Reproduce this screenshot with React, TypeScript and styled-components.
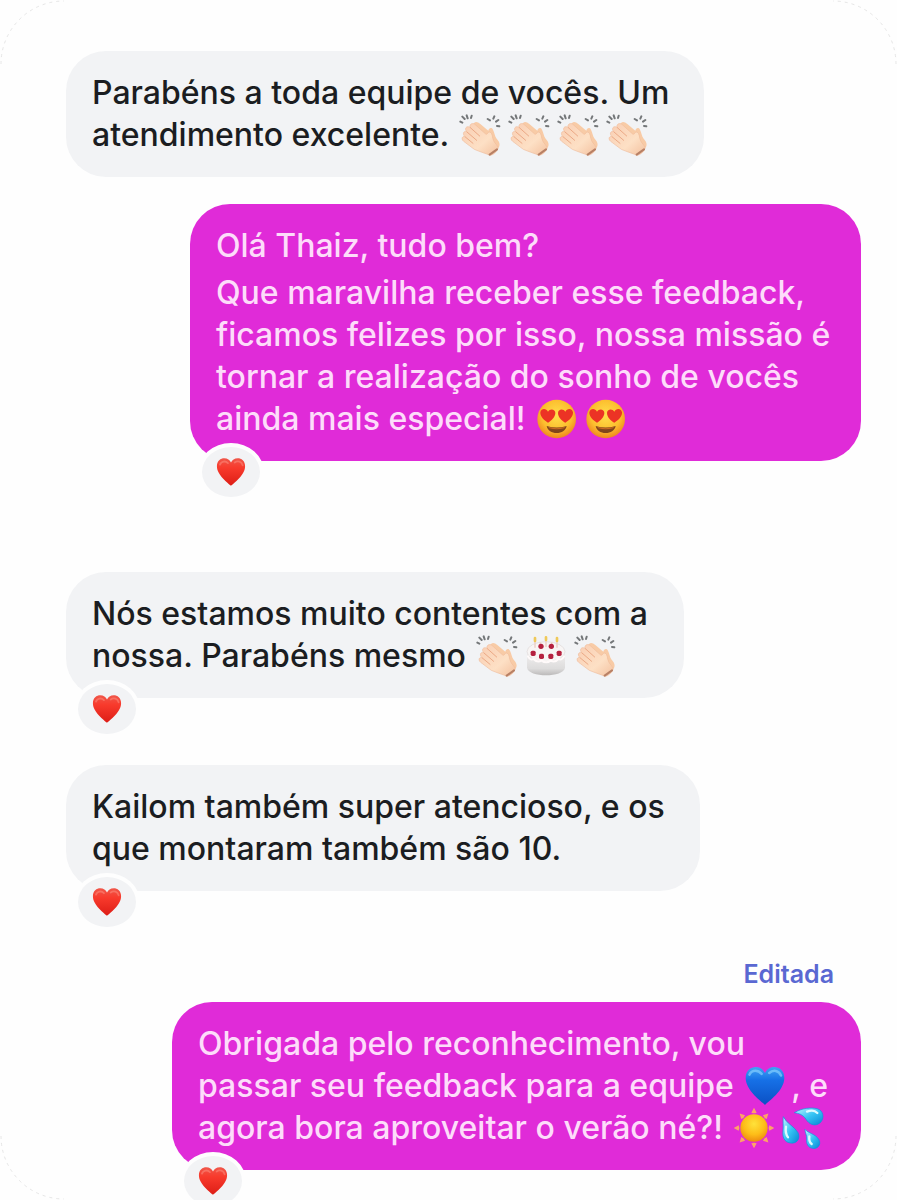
import React from "react";
import styled, { createGlobalStyle } from "styled-components";

const GlobalStyle = createGlobalStyle`
  *, *::before, *::after { box-sizing: border-box; }
  body {
    margin: 0;
    background: #fefefe;
    font-family: Inter, "Liberation Sans", sans-serif;
  }
`;

type Side = "received" | "sent";

const Page = styled.main`
  position: relative;
  overflow: hidden;
  padding: 51px 36px 30px 66px;
`;

const Thread = styled.ol`
  display: flex;
  flex-direction: column;
  margin: 0;
  padding: 0;
  list-style: none;
`;

const Message = styled.li<{ $side: Side; $gap: number }>`
  display: flex;
  flex-direction: column;
  align-items: ${(p) => (p.$side === "sent" ? "flex-end" : "flex-start")};
  margin-top: ${(p) => p.$gap}px;
`;

const Bubble = styled.div<{ $side: Side; $width: number }>`
  position: relative;
  display: flex;
  flex-direction: column;
  gap: 5px;
  width: ${(p) => p.$width}px;
  max-width: 100%;
  padding: 21px 0 21px 26px;
  border-radius: 40px;
  background: ${(p) => (p.$side === "sent" ? "#e02bd8" : "#f2f3f5")};
  color: ${(p) => (p.$side === "sent" ? "#fddcfa" : "#1b1d21")};
`;

const Paragraph = styled.p`
  margin: 0;
  font-size: 32px;
  font-weight: 450;
  line-height: 42px;
  white-space: nowrap;
`;

const Reaction = styled.span`
  position: absolute;
  left: 8px;
  bottom: -40px;
  display: flex;
  align-items: center;
  justify-content: center;
  width: 66px;
  height: 58px;
  border: 4px solid #fefefe;
  border-radius: 50%;
  background: #f2f3f5;
`;

const EditedLabel = styled.span`
  margin: 0 27px 12px 0;
  font-size: 25px;
  font-weight: 600;
  line-height: 32px;
  color: #5a68d2;
`;

const Glyph = styled.svg`
  width: 42px;
  height: 42px;
  margin: -4px 5px -4px 2px;
  vertical-align: -6px;
`;

const SmallHeart = styled.svg`
  width: 32px;
  height: 30px;
`;

const Corner = styled.svg<{ $bottom?: boolean; $right?: boolean }>`
  position: absolute;
  width: 64px;
  height: 64px;
  ${(p) => (p.$bottom ? "bottom: 0;" : "top: 0;")}
  ${(p) => (p.$right ? "right: 0;" : "left: 0;")}
  transform: scale(${(p) => (p.$right ? -1 : 1)}, ${(p) => (p.$bottom ? -1 : 1)});
  pointer-events: none;
`;

const Gradients = styled.svg`
  position: absolute;
  width: 0;
  height: 0;
`;

const HEART =
  "M50 94 C42 86 4 60 4 30 C4 12 16 4 28 4 C39 4 46 10 50 18 C54 10 61 4 72 4 C84 4 96 12 96 30 C96 60 58 86 50 94Z";

const SharedGradients = () => (
  <Gradients aria-hidden="true">
    <defs>
      <linearGradient id="red" x1="0" y1="0" x2="0" y2="1">
        <stop offset="0" stopColor="#f0574a" />
        <stop offset=".35" stopColor="#f83a2c" />
        <stop offset="1" stopColor="#dd1d16" />
      </linearGradient>
      <linearGradient id="blue" x1="0" y1="0" x2="0" y2="1">
        <stop offset="0" stopColor="#3fa4f4" />
        <stop offset=".35" stopColor="#1670e6" />
        <stop offset="1" stopColor="#0b50c4" />
      </linearGradient>
      <linearGradient id="skin" x1="0" y1="0" x2="1" y2="1">
        <stop offset="0" stopColor="#f9cdb2" />
        <stop offset=".6" stopColor="#fde0c5" />
        <stop offset="1" stopColor="#f3c09e" />
      </linearGradient>
      <radialGradient id="face" cx=".5" cy=".4" r=".6">
        <stop offset="0" stopColor="#ffe04c" />
        <stop offset=".65" stopColor="#fcbe2e" />
        <stop offset="1" stopColor="#ee8620" />
      </radialGradient>
      <radialGradient id="sun" cx=".5" cy=".35" r=".65">
        <stop offset="0" stopColor="#ffe23a" />
        <stop offset=".6" stopColor="#fdbd18" />
        <stop offset="1" stopColor="#ee8b10" />
      </radialGradient>
      <linearGradient id="water" x1="0" y1="0" x2="1" y2="1">
        <stop offset="0" stopColor="#c5f5ff" />
        <stop offset=".5" stopColor="#37c5f4" />
        <stop offset="1" stopColor="#0786d4" />
      </linearGradient>
      <linearGradient id="cream" x1="0" y1="0" x2="0" y2="1">
        <stop offset="0" stopColor="#f1efef" />
        <stop offset=".7" stopColor="#dddcdc" />
        <stop offset="1" stopColor="#bcbaba" />
      </linearGradient>
    </defs>
  </Gradients>
);

const HeartReaction = () => (
  <Reaction>
    <SmallHeart viewBox="0 0 100 98" role="img" aria-label="Coração vermelho">
      <path d={HEART} fill="url(#red)" />
      <path d="M14 25C18 13 32 12 40 20M62 18C72 11 85 15 88 27" fill="none" stroke="#ff9c8c" strokeWidth="6" strokeLinecap="round" opacity=".45" />
    </SmallHeart>
  </Reaction>
);

const Clap = () => (
  <Glyph viewBox="0 0 126 126" role="img" aria-label="Palmas">
    <path d="M42 32C46 20 56 23 64 30L88 50C90 42 97 39 102 47C107 57 107 66 113 74C124 86 125 95 115 105L96 118L60 80Z" fill="#f8cba6" />
    <path d="M14 82C5 75 10 65 18 68C9 59 14 50 23 53C15 43 23 34 33 40C31 29 42 25 50 33L80 60C86 64 86 52 93 54C101 58 99 70 104 80C109 91 119 96 117 104C112 114 104 122 94 124C78 118 60 112 46 106Z" fill="url(#skin)" stroke="#f0bd9b" strokeWidth="2" />
    <path d="M19 69L42 88M24 54L53 79M34 41L62 66" fill="none" stroke="#eba986" strokeWidth="3" strokeLinecap="round" />
    <path d="M92 122L114 106" stroke="#b88065" strokeWidth="6" strokeLinecap="round" />
    <path d="M4 23L10 26M10 8L17 15M23 4L26 13M38 5L36 12M86 15L93 19M106 7L103 14M118 18L111 23M121 37L114 36" fill="none" stroke="#747779" strokeWidth="6" strokeLinecap="round" />
  </Glyph>
);

const HeartEyes = () => (
  <Glyph viewBox="0 0 126 126" role="img" aria-label="Olhos de coração">
    <circle cx="62" cy="63" r="58" fill="url(#face)" />
    <path d="M32 84Q62 93 92 84C89 98 77 105 62 105S35 98 32 84Z" fill="#81451b" />
    <path d="M37 87Q62 94 87 87L84 91Q62 97 40 91Z" fill="#c96a24" />
    <path d="M36 74C26 68 12 57 13 43C16 30 31 31 36 41C42 30 58 33 58 45C58 58 45 69 36 74Z" fill="#ec3325" />
    <path d="M88 74C78 69 66 58 66 45C66 33 82 30 88 41C93 31 108 30 111 43C112 57 98 68 88 74Z" fill="#ec3325" />
  </Glyph>
);

const Cake = () => (
  <Glyph viewBox="0 0 126 126" role="img" aria-label="Bolo de aniversário">
    <path d="M6 54V98C10 128 116 128 120 98V54Z" fill="url(#cream)" />
    <ellipse cx="63" cy="50" rx="57" ry="30" fill="#f8f5f4" stroke="#dcd8d8" strokeWidth="2" />
    <path d="M30 14V38M63 12V36M96 14V38M46 22V42M80 22V42" stroke="#eed3cb" strokeWidth="5" />
    <path d="M30 9V18M63 7V15M96 9V18" stroke="#efc95a" strokeWidth="8" strokeLinecap="round" />
    <g fill="#b5213f">
      <circle cx="48" cy="34" r="8" /><circle cx="79" cy="34" r="8" />
      <rect x="17" y="47" width="15" height="16" rx="5" /><rect x="42" y="56" width="15" height="16" rx="5" />
      <rect x="70" y="56" width="15" height="16" rx="5" /><rect x="95" y="47" width="15" height="16" rx="5" />
    </g>
    <path d="M8 62Q14 77 26 72Q36 84 50 77Q63 87 77 77Q90 84 100 72Q112 77 118 62" fill="none" stroke="#fffafa" strokeWidth="6" />
  </Glyph>
);

const BlueHeart = () => (
  <Glyph viewBox="0 0 100 98" role="img" aria-label="Coração azul">
    <path d={HEART} fill="url(#blue)" />
    <path d="M13 22C19 9 34 11 42 20M60 18C70 9 83 12 88 24" fill="none" stroke="#8bd3ff" strokeWidth="6" strokeLinecap="round" opacity=".65" />
  </Glyph>
);

const Sun = () => (
  <Glyph viewBox="0 0 126 126" role="img" aria-label="Sol">
    <g fill="#fda368">
      {[0, 45, 90, 135, 180, 225, 270, 315].map((angle) => (
        <path key={angle} d="M63 2L71 17Q63 21 55 17Z" transform={`rotate(${angle} 63 63)`} />
      ))}
    </g>
    <circle cx="63" cy="63" r="41" fill="url(#sun)" />
  </Glyph>
);

const Drops = () => (
  <Glyph viewBox="0 0 126 126" role="img" aria-label="Gotas de suor">
    <g fill="url(#water)" stroke="#0795df" strokeWidth="2">
      <path d="M37 17C61 3 87 1 105 5C125 10 128 34 115 47C98 61 81 51 72 37C63 23 51 19 37 17Z" />
      <path d="M4 29C13 49 37 58 48 77C57 96 43 111 25 108C5 105 1 88 3 71C5 55 2 43 4 29Z" />
      <path d="M69 67C78 79 100 80 111 98C119 116 104 127 91 124C77 121 73 110 74 96C75 83 69 79 69 67Z" />
    </g>
    <path d="M75 14Q95 6 106 18M12 59Q9 80 18 91M82 88Q80 104 89 111" fill="none" stroke="#dcfbff" strokeWidth="7" strokeLinecap="round" />
  </Glyph>
);

const Outline = (props: { $bottom?: boolean; $right?: boolean }) => (
  <Corner {...props} viewBox="0 0 64 64" aria-hidden="true">
    <path d="M1 64A63 63 0 0 1 64 1" fill="none" stroke="#e6e6e6" strokeDasharray="3 4" />
  </Corner>
);

export default function App() {
  return (
    <Page>
      <GlobalStyle />
      <SharedGradients />
      <Outline />
      <Outline $right />
      <Outline $bottom />
      <Outline $bottom $right />
      <Thread>
        <Message $side="received" $gap={0}>
          <Bubble $side="received" $width={638}>
            <Paragraph>
              Parabéns a toda equipe de vocês. Um
              <br />
              atendimento excelente. <Clap /><Clap /><Clap /><Clap />
            </Paragraph>
          </Bubble>
        </Message>
        <Message $side="sent" $gap={27}>
          <Bubble $side="sent" $width={671}>
            <Paragraph>Olá Thaiz, tudo bem?</Paragraph>
            <Paragraph>
              Que maravilha receber esse feedback,
              <br />
              ficamos felizes por isso, nossa missão é
              <br />
              tornar a realização do sonho de vocês
              <br />
              ainda mais especial! <HeartEyes /><HeartEyes />
            </Paragraph>
            <HeartReaction />
          </Bubble>
        </Message>
        <Message $side="received" $gap={111}>
          <Bubble $side="received" $width={618}>
            <Paragraph>
              Nós estamos muito contentes com a
              <br />
              nossa. Parabéns mesmo <Clap /><Cake /><Clap />
            </Paragraph>
            <HeartReaction />
          </Bubble>
        </Message>
        <Message $side="received" $gap={67}>
          <Bubble $side="received" $width={634}>
            <Paragraph>
              Kailom também super atencioso, e os
              <br />
              que montaram também são 10.
            </Paragraph>
            <HeartReaction />
          </Bubble>
        </Message>
        <Message $side="sent" $gap={67}>
          <EditedLabel>Editada</EditedLabel>
          <Bubble $side="sent" $width={689}>
            <Paragraph>
              Obrigada pelo reconhecimento, vou
              <br />
              passar seu feedback para a equipe <BlueHeart />, e
              <br />
              agora bora aproveitar o verão né?! <Sun /><Drops />
            </Paragraph>
            <HeartReaction />
          </Bubble>
        </Message>
      </Thread>
    </Page>
  );
}
